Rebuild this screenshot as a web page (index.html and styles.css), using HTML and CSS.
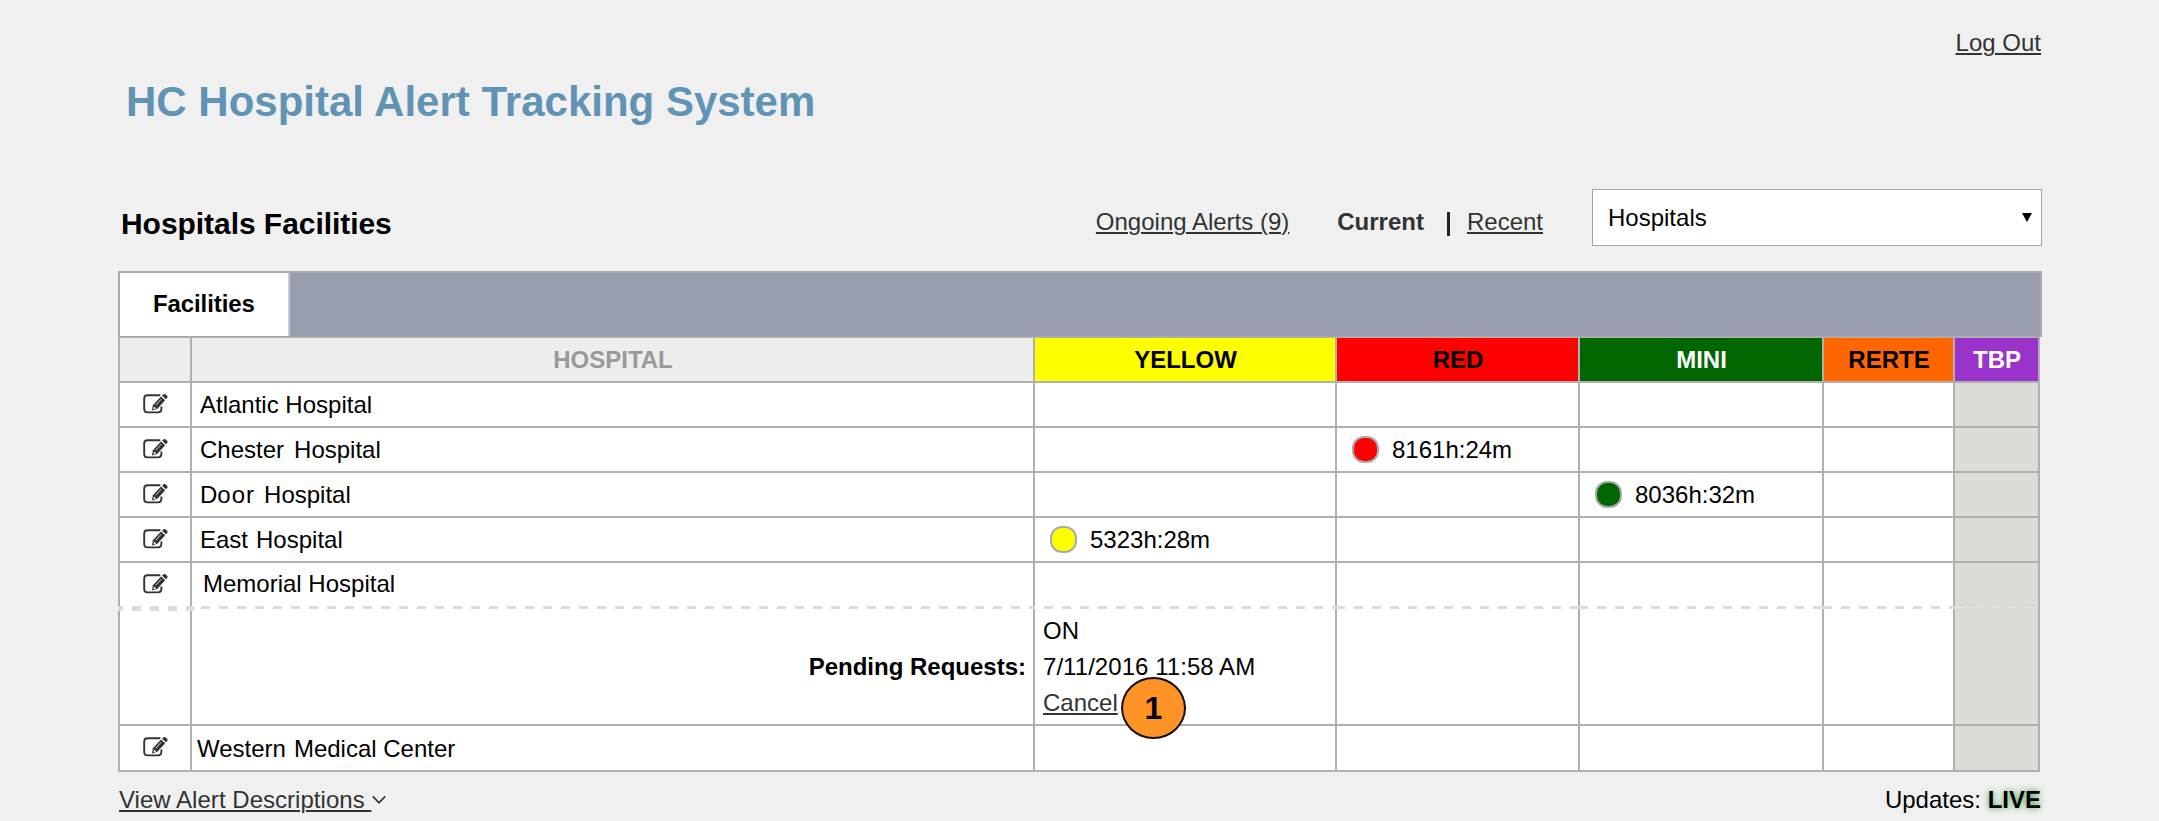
FILE: index.html
```html
<!DOCTYPE html>
<html lang="en">
<head>
<meta charset="utf-8">
<title>HC Hospital Alert Tracking System</title>
<link rel="stylesheet" href="styles.css">
</head>
<body>
<svg class="sprite" width="0" height="0" aria-hidden="true">
  <symbol id="edit" viewBox="0 0 25 20">
    <path d="M17.3 1.2H4.6Q1.2 1.2 1.2 4.6V14.8Q1.2 18.4 4.6 18.4H14.8Q18.4 18.4 18.4 14.8V12.6" fill="none" stroke="#333" stroke-width="1.9"/>
    <path d="M9 16.6L9.9 11.2L18 2.4L22.2 6.2L14.4 14.8Z" fill="#333"/>
    <path d="M19 1.6L20.4 .4Q21.2-.2 22 0L24.4 2.1Q24.8 3 24.2 3.9L22.9 5.3Z" fill="#333"/>
    <path d="M10.5 15.2L11 12.5L13.2 14.5Z" fill="#fff"/>
    <path d="M12.8 11.2L18.3 5.1" stroke="#fff" stroke-width=".8"/>
  </symbol>
</svg>
<div class="page">
  <div class="account"><a class="link">Log Out</a></div>
  <h1 class="title">HC Hospital Alert Tracking System</h1>
  <div class="toolbar">
    <h2 class="heading">Hospitals Facilities</h2>
    <nav class="nav">
      <a class="link">Ongoing Alerts (9)</a>
      <b class="current">Current</b>
      <span class="bar"></span>
      <a class="link recent">Recent</a>
    </nav>
    <div class="select"><span>Hospitals</span><svg width="10" height="9" viewBox="0 0 10 9"><path d="M0 0H10L5 9Z"/></svg></div>
  </div>
  <div class="tabs"><div class="tab">Facilities</div></div>
  <table class="grid">
    <colgroup><col class="c1"><col class="c2"><col class="c3"><col class="c4"><col class="c5"><col class="c6"><col class="c7"></colgroup>
    <tr class="head"><th></th><th class="muted">HOSPITAL</th><th class="yellow">YELLOW</th><th class="red">RED</th><th class="mini">MINI</th><th class="rerte">RERTE</th><th class="tbp">TBP</th></tr>
    <tr><td class="edit"><svg><use href="#edit"/></svg></td><td>Atlantic Hospital</td><td></td><td></td><td></td><td></td><td class="off"></td></tr>
    <tr><td class="edit"><svg><use href="#edit"/></svg></td><td>Chester<span class="gap-l">Hospital</span></td><td></td><td><div class="alert"><i class="dot red"></i>8161h:24m</div></td><td></td><td></td><td class="off"></td></tr>
    <tr><td class="edit"><svg><use href="#edit"/></svg></td><td>D<span class="wide">oo</span>r<span class="gap-l">Hospital</span></td><td></td><td></td><td><div class="alert"><i class="dot mini"></i>8036h:32m</div></td><td></td><td class="off"></td></tr>
    <tr><td class="edit"><svg><use href="#edit"/></svg></td><td>East<span class="gap-m">Hospital</span></td><td><div class="alert"><i class="dot yellow"></i>5323h:28m</div></td><td></td><td></td><td></td><td class="off"></td></tr>
    <tr><td class="edit"><svg><use href="#edit"/></svg></td><td class="indent">Memorial Hospital</td><td></td><td></td><td></td><td></td><td class="off"></td></tr>
    <tr class="dash"><td class="thick"></td><td class="shift"></td><td class="shift"></td><td></td><td></td><td></td><td class="off"></td></tr>
    <tr class="pending"><td></td><td class="label">Pending Requests:</td><td class="request">ON<br><span class="stamp">7/11/2016 11:58 AM</span><br><a class="link">Cancel</a><span class="badge">1</span></td><td></td><td></td><td></td><td class="off"></td></tr>
    <tr class="last"><td class="edit"><svg><use href="#edit"/></svg></td><td class="outdent">Western<span class="gap-m">Medical Center</span></td><td></td><td></td><td></td><td></td><td class="off"></td></tr>
  </table>
  <div class="footer">
    <div class="descriptions"><a class="link">View Alert Descriptions&nbsp;</a><svg width="14" height="10" viewBox="0 0 14 10"><path d="M.8 1.4L7 7.8L13.2 1.4" fill="none" stroke="#333" stroke-width="1.7"/></svg></div>
    <div>Updates: <b class="live">LIVE</b></div>
  </div>
</div>
</body>
</html>
```
FILE: styles.css
```css
* { box-sizing: border-box; }
body {
  margin: 0;
  height: 821px;
  overflow: hidden;
  background: #f0f0f0;
  color: #000;
  font: 24px/30px "Liberation Sans", Arial, sans-serif;
}
.sprite { position: absolute; }
.page { width: 1924px; margin-left: 118px; padding-top: 28px; }
.account { text-align: right; padding-right: 1px; }
.link {
  color: #333;
  text-decoration: underline;
  text-decoration-thickness: 1.5px;
  text-underline-offset: 2px;
}
.title { margin: 19px 0 0 8px; font-size: 42px; line-height: 50px; color: #6193b5; }
.toolbar { display: flex; height: 57px; margin-top: 62px; }
.heading { margin: 18px 0 0 3px; font-size: 30px; line-height: 34px; letter-spacing: -0.05px; }
.nav { display: flex; margin: 18px 49px 0 auto; }
.current { margin-left: 48px; color: #333; }
.bar { width: 3px; height: 24px; margin: 5px 0 0 23px; background: #222; }
.recent { margin-left: 17px; }
.select {
  display: flex;
  align-items: center;
  justify-content: space-between;
  width: 450px;
  padding: 0 9px 0 15px;
  border: 1.5px solid #a4a4a4;
  background: #fff;
}
.tabs { height: 66px; margin-top: 25px; border: 2px solid #aaa; border-bottom-width: 1px; background: #989eae; }
.tab {
  width: 170px;
  height: 63px;
  padding: 16px 0 0 33px;
  border-right: 2px solid #ccc;
  background: #fff;
  font-weight: bold;
  letter-spacing: -0.1px;
}
.grid { width: 1922px; table-layout: fixed; border-spacing: 0; border-right: 2px solid #b0b0b0; }
.c1 { width: 72px; }
.c2 { width: 843px; }
.c3 { width: 302px; }
.c4 { width: 243px; }
.c5 { width: 244px; }
.c6 { width: 131px; }
.c7 { width: 85px; }
.grid tr { height: 45px; }
.grid td, .grid th {
  padding: 0 0 0 8px;
  border: 0 solid #b0b0b0;
  border-left-width: 2px;
  border-top-width: 2px;
  background: #fff;
}
.grid .head { height: 44px; }
.grid .head th { padding: 0 0 0 1px; border-top-width: 1px; background: #ededeb; }
.grid .muted { color: #999; }
.grid .head .yellow, .dot.yellow { background: #ff0; }
.grid .head .red, .dot.red { background: #f00; }
.grid .head .mini { background: #060; color: #fff; }
.dot.mini { background: #060; }
.grid .head .rerte { background: #f60; }
.grid .head .tbp { background: #93c; color: #fff; }
.grid .off { background: #dcdcd6; }
.grid .edit { padding: 0 0 2px 23px; }
.edit svg { display: block; width: 25px; height: 20px; overflow: visible; }
.gap-l { margin-left: 10px; }
.gap-m { margin-left: 8px; }
.wide { letter-spacing: 1px; }
.grid .indent { padding: 0 0 2px 11px; }
.grid .outdent { padding: 1px 0 0 5px; }
.alert { display: flex; align-items: center; gap: 13px; padding-left: 7px; }
.dot { width: 27px; height: 27px; border: 2px solid #aaa; border-radius: 12px; }
.grid .dash { height: 3px; }
.grid .dash td {
  height: 3px;
  padding: 0;
  border-top: 0;
  border-left-color: #dcdcd6;
  background: #fff repeating-linear-gradient(90deg, #dcdcd6 0 8px, transparent 8px 17px, #dcdcd6 17px 18px);
}
.grid .dash .shift { background-position: -8px 0; background-size: 900px 3px; }
.grid .dash .off { background: #dcdcd6 repeating-linear-gradient(90deg, #e6e6e2 0 9px, transparent 9px 18px) 0 1px / 90px 1px no-repeat; }
.grid .dash .thick { position: relative; background: #fff; }
.thick::after {
  content: "";
  position: absolute;
  left: -2px;
  top: 0;
  width: 76px;
  height: 5px;
  background: repeating-linear-gradient(90deg, #dcdcd6 0 5px, transparent 5px 14px, #dcdcd6 14px 18px);
}
.grid .pending { height: 115px; }
.grid .pending td { border-top: 0; }
.grid .label { padding-right: 7px; text-align: right; font-weight: bold; }
.grid .request { position: relative; line-height: 36px; }
.stamp { letter-spacing: 0.05px; }
.badge {
  position: absolute;
  left: 86px;
  top: 68px;
  display: flex;
  align-items: center;
  justify-content: center;
  width: 65px;
  height: 62px;
  border: 2px solid #111;
  border-radius: 50%;
  background: #ff9326;
  font-size: 32px;
  font-weight: bold;
}
.grid .last { height: 48px; }
.grid .last td { border-bottom-width: 2px; }
.footer { display: flex; justify-content: space-between; padding: 13px 1px 0 1px; }
.descriptions { display: flex; align-items: center; letter-spacing: 0.03px; }
.descriptions svg { margin-left: 1px; }
.live { text-shadow: 0 0 6px #3c9a3c; }
```
